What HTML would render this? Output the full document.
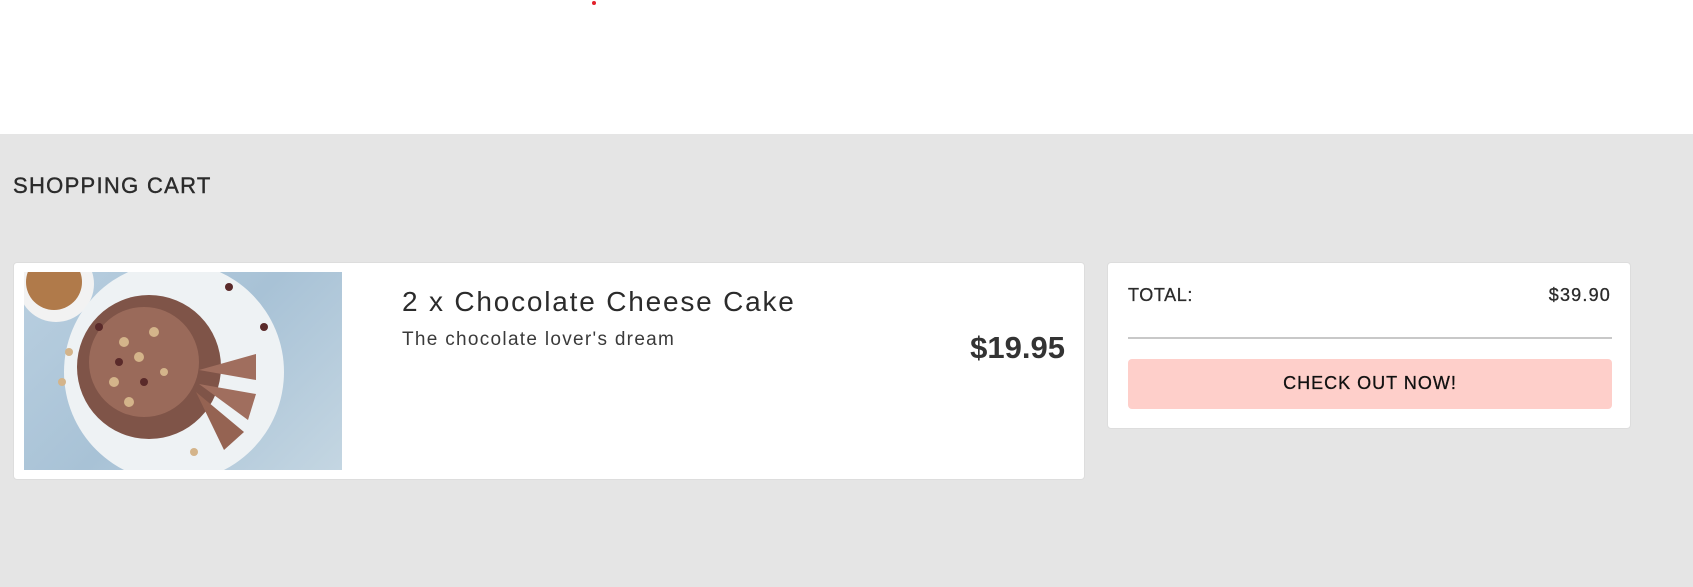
<!DOCTYPE html>
<html><head><meta charset="utf-8"><style>
*{margin:0;padding:0;box-sizing:border-box}
body{width:1693px;height:587px;background:#fff;font-family:"Liberation Sans",sans-serif;color:#2b2b2b;position:relative;overflow:hidden}
.dot{position:absolute;left:592px;top:1px;width:4px;height:4px;border-radius:50%;background:#e2202a}
.gray{position:absolute;left:0;top:134px;width:1693px;height:453px;background:#e5e5e5}
h1{position:absolute;left:13px;top:173px;font-size:22px;font-weight:normal;letter-spacing:1.3px;color:#2b2b2b;-webkit-text-stroke:0.4px #2b2b2b}
.card{position:absolute;background:#fff;border-radius:4px;border:1px solid #ddd}
.c1{left:13px;top:262px;width:1072px;height:218px}
.c2{left:1107px;top:262px;width:524px;height:167px}
.img{position:absolute;left:10px;top:9px;width:318px;height:198px;overflow:hidden;background:linear-gradient(135deg,#b9cfe0,#a8c2d6 50%,#c4d6e2)}
.t{position:absolute;left:388px;top:23px;font-size:28px;letter-spacing:1.8px;color:#2b2b2b}
.s{position:absolute;left:388px;top:66px;font-size:19px;letter-spacing:1.3px;color:#3a3a3a}
.p{position:absolute;right:19px;top:67px;font-size:31px;font-weight:bold;color:#333}
.tl{position:absolute;left:20px;top:22px;font-size:18px;letter-spacing:0.6px;-webkit-text-stroke:0.3px #2b2b2b}
.tr{position:absolute;right:19px;top:22px;font-size:18px;letter-spacing:1.2px;-webkit-text-stroke:0.3px #2b2b2b}
.hr{position:absolute;left:20px;top:74px;width:484px;height:2px;background:#c8c8c8}
.btn{position:absolute;left:20px;top:96px;width:484px;height:50px;background:#fecfca;border-radius:4px;text-align:center;line-height:48px;font-size:18px;letter-spacing:1px;color:#111;-webkit-text-stroke:0.3px #111}
</style></head><body>
<div class="dot"></div>
<div class="gray"></div>
<h1>SHOPPING CART</h1>
<div class="card c1">
 <div class="img">
  <svg width="318" height="198" viewBox="0 0 318 198">
   <circle cx="32" cy="12" r="38" fill="#f2f2f2"/>
   <circle cx="30" cy="10" r="28" fill="#b07a4a"/>
   <circle cx="150" cy="100" r="110" fill="#eef2f4"/>
   <circle cx="125" cy="95" r="72" fill="#7f5448"/>
   <circle cx="120" cy="90" r="55" fill="#9a6a5a"/>
   <path d="M175 98 L232 82 L232 108 Z" fill="#a06e5e"/>
   <path d="M175 112 L232 122 L224 148 Z" fill="#a06e5e"/>
   <path d="M172 120 L220 160 L200 178 Z" fill="#956352"/>
   <g fill="#d4b48a"><circle cx="100" cy="70" r="5"/><circle cx="115" cy="85" r="5"/><circle cx="90" cy="110" r="5"/><circle cx="130" cy="60" r="5"/><circle cx="105" cy="130" r="5"/><circle cx="140" cy="100" r="4"/><circle cx="45" cy="80" r="4"/><circle cx="38" cy="110" r="4"/><circle cx="170" cy="180" r="4"/></g>
   <g fill="#5a2a2a"><circle cx="120" cy="110" r="4"/><circle cx="95" cy="90" r="4"/><circle cx="75" cy="55" r="4"/><circle cx="240" cy="55" r="4"/><circle cx="205" cy="15" r="4"/></g>
  </svg>
 </div>
 <div class="t">2 x Chocolate Cheese Cake</div>
 <div class="s">The chocolate lover's dream</div>
 <div class="p">$19.95</div>
</div>
<div class="card c2">
 <div class="tl">TOTAL:</div>
 <div class="tr">$39.90</div>
 <div class="hr"></div>
 <div class="btn">CHECK OUT NOW!</div>
</div>
</body></html>
